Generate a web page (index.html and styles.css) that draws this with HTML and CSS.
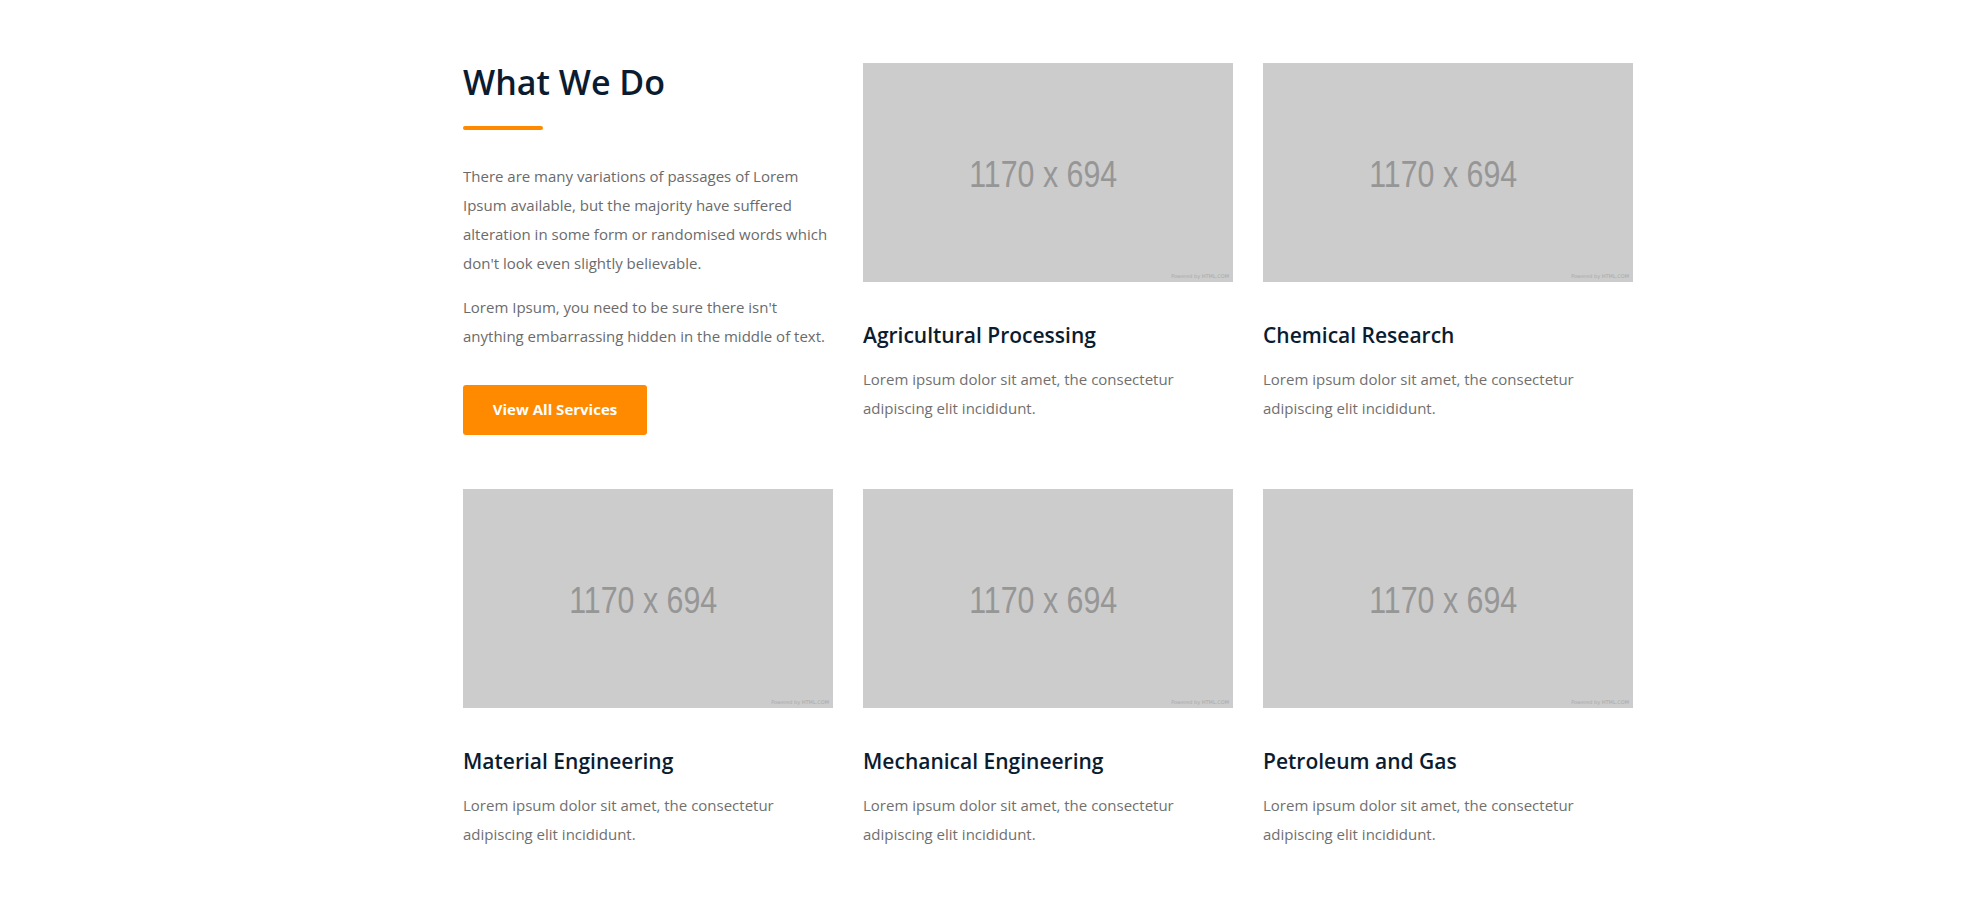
FILE: index.html
```html
<!DOCTYPE html>
<html lang="en">
<head>
<meta charset="utf-8">
<title>What We Do</title>
<link rel="stylesheet" href="styles.css">
</head>
<body>
<section class="services">
  <div class="grid">
    <div class="intro">
      <h2 class="intro-title">What We Do</h2>
      <span class="intro-line"></span>
      <p class="intro-text">There are many variations of passages of Lorem Ipsum available, but the majority have suffered alteration in some form or randomised words which don't look even slightly believable.</p>
      <p class="intro-text intro-text-2">Lorem Ipsum, you need to be sure there isn't anything embarrassing hidden in the middle of text.</p>
      <a class="btn" href="#">View All Services</a>
    </div>

    <div class="card">
      <div class="ph"><span class="ph-size">1170 x 694</span><span class="ph-credit">Powered by HTML.COM</span></div>
      <h3 class="card-title">Agricultural Processing</h3>
      <p class="card-text">Lorem ipsum dolor sit amet, the consectetur adipiscing elit incididunt.</p>
    </div>

    <div class="card">
      <div class="ph"><span class="ph-size">1170 x 694</span><span class="ph-credit">Powered by HTML.COM</span></div>
      <h3 class="card-title">Chemical Research</h3>
      <p class="card-text">Lorem ipsum dolor sit amet, the consectetur adipiscing elit incididunt.</p>
    </div>

    <div class="card">
      <div class="ph"><span class="ph-size">1170 x 694</span><span class="ph-credit">Powered by HTML.COM</span></div>
      <h3 class="card-title">Material Engineering</h3>
      <p class="card-text">Lorem ipsum dolor sit amet, the consectetur adipiscing elit incididunt.</p>
    </div>

    <div class="card">
      <div class="ph"><span class="ph-size">1170 x 694</span><span class="ph-credit">Powered by HTML.COM</span></div>
      <h3 class="card-title">Mechanical Engineering</h3>
      <p class="card-text">Lorem ipsum dolor sit amet, the consectetur adipiscing elit incididunt.</p>
    </div>

    <div class="card">
      <div class="ph"><span class="ph-size">1170 x 694</span><span class="ph-credit">Powered by HTML.COM</span></div>
      <h3 class="card-title">Petroleum and Gas</h3>
      <p class="card-text">Lorem ipsum dolor sit amet, the consectetur adipiscing elit incididunt.</p>
    </div>
  </div>
</section>
</body>
</html>
```

FILE: styles.css
```css
* { box-sizing: border-box; }

html, body {
  margin: 0;
  padding: 0;
  background: #ffffff;
}

body {
  font-family: "Open Sans", "Noto Sans", sans-serif;
  color: #6b6b6b;
}

.services {
  padding: 63px 0 40px 463px;
}

.grid {
  width: 1170px;
  display: grid;
  grid-template-columns: repeat(3, 370px);
  column-gap: 30px;
  row-gap: 54px;
  align-items: start;
}

.intro {
  display: flex;
  flex-direction: column;
  align-items: flex-start;
}

.intro-title {
  margin: 2px 0 0;
  font-size: 34px;
  line-height: 1;
  font-weight: 600;
  color: #0b1c30;
}

.intro-line {
  display: block;
  width: 80px;
  height: 4px;
  border-radius: 2px;
  background: #ff8a00;
  margin-top: 27px;
}

.intro-text {
  margin: 32px 0 0;
  font-size: 15px;
  line-height: 29px;
}

.intro-text-2 {
  margin-top: 15px;
}

.btn {
  margin-top: 34px;
  display: flex;
  align-items: center;
  justify-content: center;
  width: 184px;
  height: 50px;
  padding-bottom: 3px;
  border-radius: 3px;
  background: #ff8a00;
  color: #ffffff;
  font-size: 15px;
  font-weight: 700;
  text-decoration: none;
}

.ph {
  position: relative;
  width: 370px;
  height: 219px;
  background: #cccccc;
  display: flex;
  align-items: center;
  justify-content: center;
}

.ph-size {
  font-family: "Liberation Sans", Arial, sans-serif;
  font-size: 37px;
  color: #969696;
  padding-top: 4px;
  margin-right: 9px;
  transform: scaleX(0.82);
}

.ph-credit {
  position: absolute;
  right: 4px;
  bottom: 3px;
  font-family: "DejaVu Sans", sans-serif;
  font-size: 5px;
  color: #a8a8a8;
}

.card-title {
  margin: 41px 0 0;
  font-size: 21px;
  line-height: 24px;
  font-weight: 600;
  color: #0b1c30;
}

.card-text {
  margin: 18px 0 0;
  font-size: 15px;
  line-height: 29px;
  color: #707070;
}
```
